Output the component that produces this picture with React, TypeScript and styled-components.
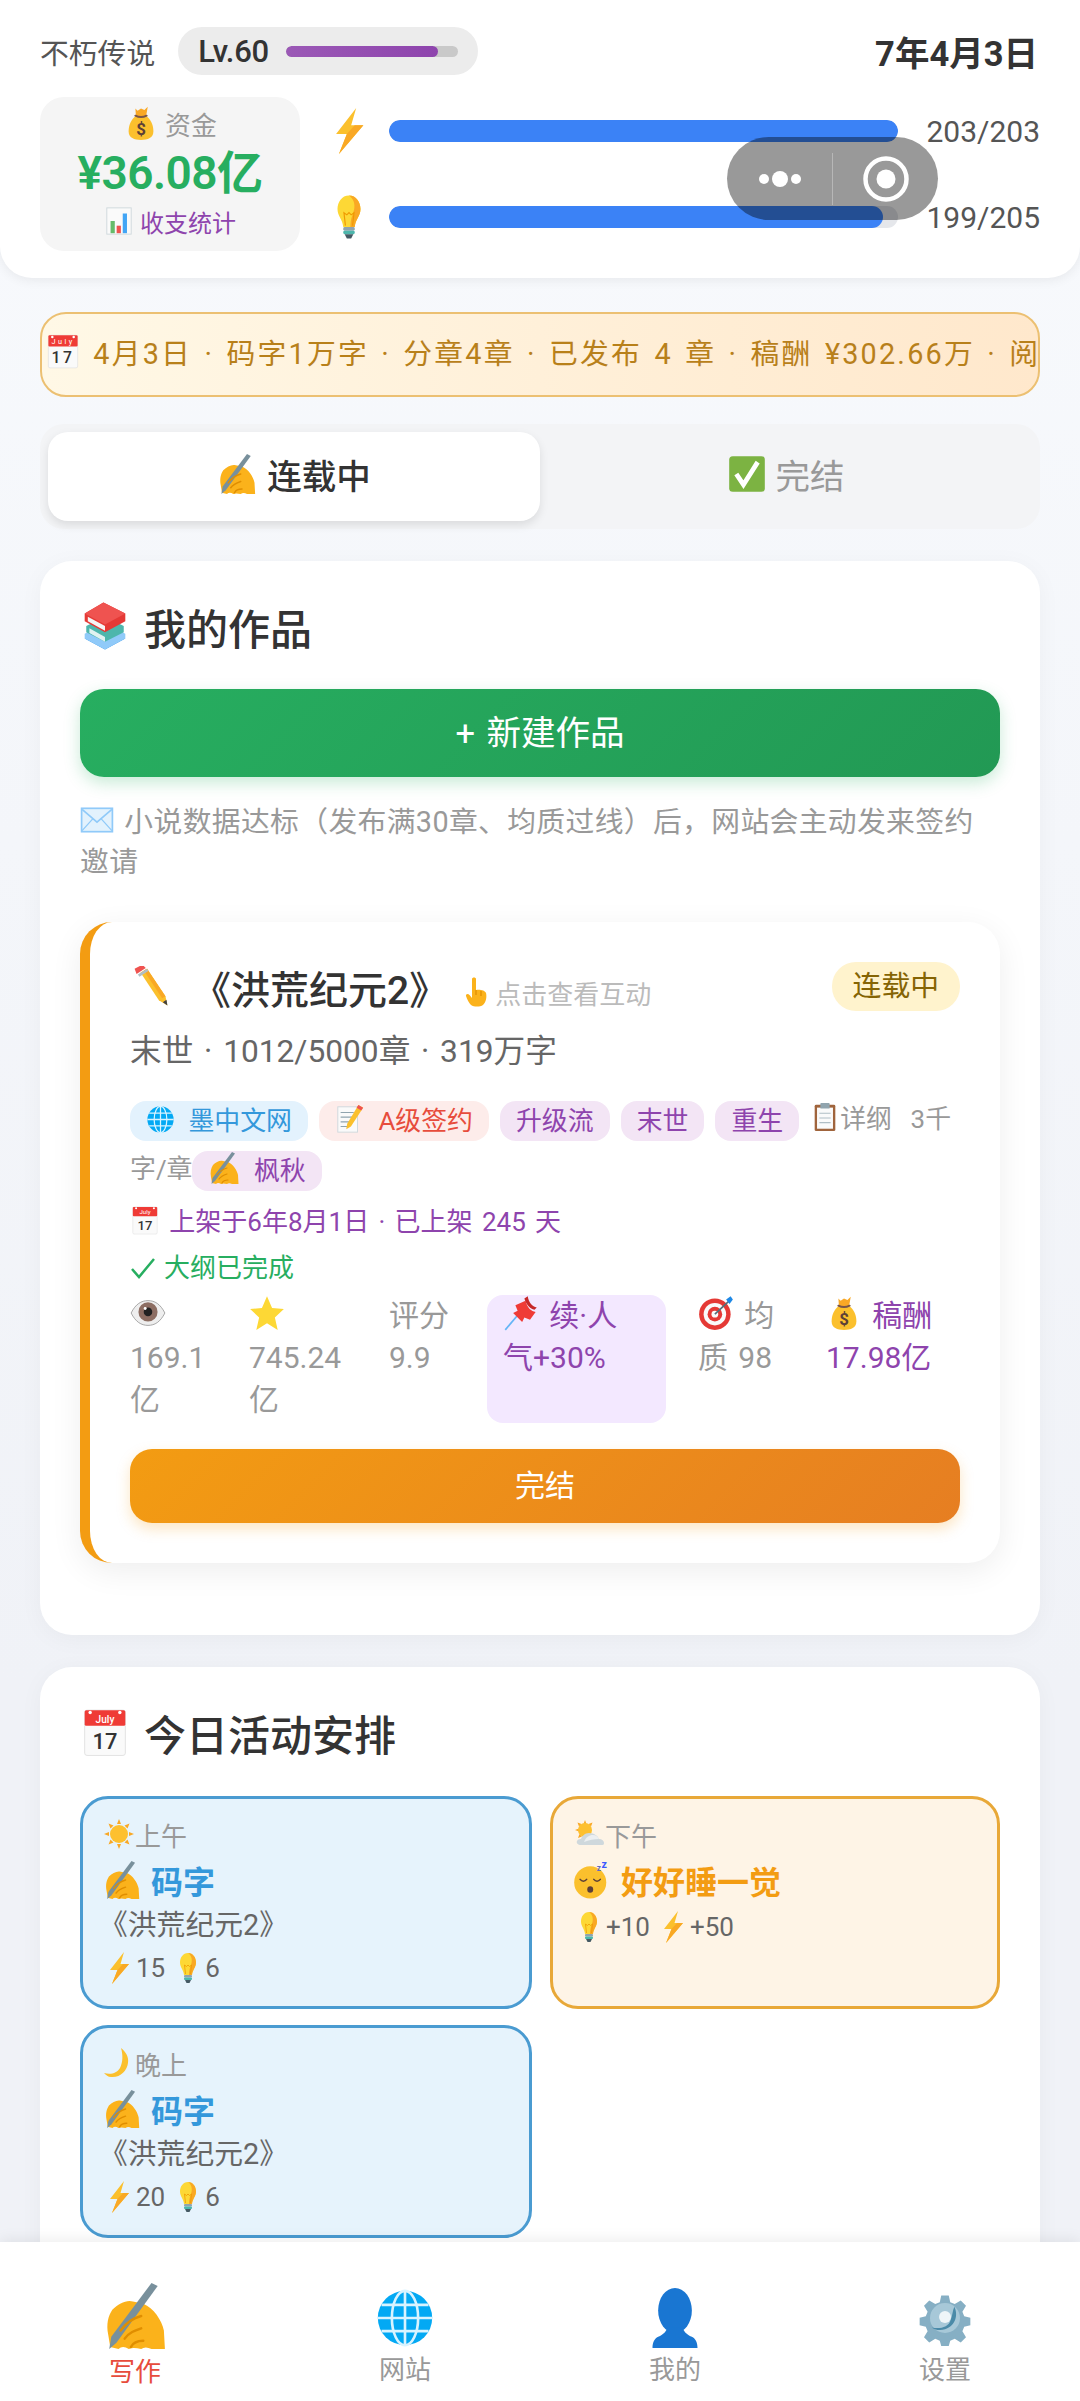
import React from 'react'
import styled, { createGlobalStyle } from 'styled-components'

const GlobalStyle = createGlobalStyle`
  html, body {
    margin: 0;
    padding: 0;
    background: #f4f6fa;
  }
  body {
    font-family: "Roboto", "Noto Sans CJK SC", sans-serif;
    word-spacing: 0.18em;
    color: #333333;
  }
  * {
    box-sizing: border-box;
  }
`

const glyphs: Record<string, React.ReactNode> = {
  bolt: (
    <>
      <polygon points="21,0 7,18 14.5,18 9,32 26,12 17.5,12" fill="#fbc02d" />
      <polygon points="14.5,18 9,32 26,12 20,12" fill="#f9a825" />
    </>
  ),
  bulb: (
    <>
      <path d="M16 1c-5 0-8 4.500-8 9.500 0 5 3.500 7 4 12.500h8c.5-5.500 4-7.500 4-12.500C24 5.500 21 1 16 1z" fill="#fdd835" />
      <path d="M16 1c3 2 4.500 6 3.500 10-.8 3.500-2.500 6-2.500 12h3c.5-5.500 4-7.500 4-12.500C24 5.500 21 1 16 1z" fill="#f9a825" />
      <path d="M13.500 22l-1-9 2 1.500 1.500-1.500 1.500 1.500 2-1.500-1 9" fill="none" stroke="#ef9a00" strokeWidth=".8" />
      <rect x="12" y="23" width="8" height="2.500" rx="1" fill="#90a4ae" />
      <rect x="12" y="25.500" width="8" height="2.500" rx="1" fill="#4db6ac" />
      <path d="M13 28h6l-1.500 3h-3z" fill="#455a64" />
    </>
  ),
  bag: (
    <>
      <path d="M11 10C6 14 5 20 5 23.500 5 29 10 31 16 31s11-2 11-7.500C27 20 26 14 21 10z" fill="#fbc02d" />
      <path d="M11 3l2 2 3-2 3 1.500 3-3-1.500 8.500h-9z" fill="#f9a825" />
      <path d="M11 9.500c3 1.500 7 1.500 10 0" fill="none" stroke="#795548" strokeWidth="1.800" strokeLinecap="round" />
      <text x="16" y="27" fontSize="15" fontWeight="700" fontFamily="Roboto, sans-serif" textAnchor="middle" fill="#5d4037">$</text>
    </>
  ),
  chart: (
    <>
      <rect x="3" y="2" width="26" height="28" fill="#fafafa" stroke="#cfd8dc" strokeWidth="1" />
      <rect x="7" y="16" width="4.500" height="13" fill="#66bb6a" />
      <rect x="13.500" y="21" width="4.500" height="8" fill="#ef5350" />
      <rect x="20" y="8" width="4.500" height="21" fill="#42a5f5" />
    </>
  ),
  calendar: (
    <>
      <rect x="3" y="2" width="26" height="29" rx="1.500" fill="#fafafa" stroke="#e0e0e0" strokeWidth=".6" />
      <rect x="3" y="2" width="26" height="10" rx="1" fill="#ef3b36" />
      <circle cx="6.500" cy="3.500" r="1.100" fill="#fff" />
      <circle cx="25.500" cy="3.500" r="1.100" fill="#fff" />
      <text x="16" y="10" fontSize="6.500" fontFamily="Roboto, sans-serif" textAnchor="middle" fill="#ffffff">July</text>
      <text x="16" y="27" fontSize="14" fontWeight="500" fontFamily="Roboto, sans-serif" textAnchor="middle" fill="#333333">17</text>
    </>
  ),
  writing: (
    <>
      <path d="M5 13C8 10 12 8 15 9l5 1c5 2 9 8 10 13l.5 9H24q-3-1.500-5 0-4-1-6 0-3-2-5 0l-4-1-1-6c-1-5 0-9 2-12z" fill="#fbb21b" />
      <polygon points="24,0 27,1.500 7,29 3.500,32 4.500,26" fill="#78909c" />
      <path d="M9 23c3-4 6-6 10-7M11 27c2-3 5-4 8-5M14 31c1-2 3-3 6-3" fill="none" stroke="#e08e00" strokeWidth="1.200" strokeLinecap="round" />
    </>
  ),
  check: (
    <>
      <rect x="1" y="1" width="30" height="30" rx="3" fill="#7cb342" />
      <polyline points="7,16 13,25 25,6" fill="none" stroke="#ffffff" strokeWidth="4" />
    </>
  ),
  books: (
    <>
      <path d="M3 24l13-7 13 7-13 7z" fill="#1e88e5" />
      <path d="M3 21l13-7 13 7v3l-13 7-13-7z" fill="#90caf9" />
      <path d="M4 16l12-6 12 6v4l-12 6-12-6z" fill="#4db6ac" />
      <path d="M6 17.500l10 5.500v3l-10-5.500z" fill="#e0f2f1" />
      <path d="M3 8L15 1l14 7v5l-13 7L3 13z" fill="#e53935" />
      <path d="M5 10l11 6v3L5 13z" fill="#f5f5f5" />
      <path d="M3 8l13 7 13-7-14-7z" fill="#ef5350" />
    </>
  ),
  mail: (
    <>
      <rect x="1.500" y="5" width="29" height="22" fill="#e3f2fd" stroke="#90caf9" strokeWidth="1.600" />
      <polyline points="2,6 16,18 30,6" fill="none" stroke="#90caf9" strokeWidth="1.600" />
      <path d="M2 26l10-11M30 26L20 15" fill="none" stroke="#90caf9" strokeWidth="1.200" />
    </>
  ),
  pencil: (
    <>
      <polygon points="8,5 13,2 27,23 28.500,30 22,26" fill="#fbc02d" />
      <polygon points="13,2 27,23 24.500,24.500 10.500,3.500" fill="#f9a825" />
      <polygon points="5,6 12,1.500 9.500,-1 3.500,2" fill="#ef5350" />
      <polygon points="6,6.500 13,2 14,3.800 7.200,8.200" fill="#b0bec5" />
      <polygon points="25,27.600 27.800,25.800 28.500,30" fill="#424242" />
    </>
  ),
  pointUp: (
    <>
      <path d="M13 3c0-2 4-2 4 0v11c3-1 9 0 10 3 1 4 0 9-3 12-3 2-9 2-12 0-2-2-4-6-5-9-.5-2 2-3 3.500-1l2.500 3z" fill="#fbb21b" />
      <path d="M17 14v5M22 15v5" stroke="#e08e00" strokeWidth="1.200" fill="none" />
    </>
  ),
  globe: (
    <>
      <circle cx="16" cy="16" r="14.500" fill="#03a9f4" />
      <ellipse cx="16" cy="16" rx="7" ry="14.500" fill="none" stroke="#d8f3ff" strokeWidth="1.400" />
      <path d="M16 1.500v29M1.500 16h29M3.500 9h25M3.500 23h25" stroke="#d8f3ff" strokeWidth="1.400" fill="none" />
    </>
  ),
  memo: (
    <>
      <rect x="3" y="3" width="21" height="27" fill="#fafafa" stroke="#cfd8dc" strokeWidth="1" />
      <path d="M6 9h14M6 14h14M6 19h10M6 24h8" stroke="#90a4ae" strokeWidth="1.200" />
      <polygon points="25,1 30,4 17,24 12,27 13,21" fill="#fbc02d" />
      <polygon points="25,1 30,4 28,7 23,4" fill="#ef5350" />
    </>
  ),
  clipboard: (
    <>
      <rect x="5" y="3" width="22" height="28" rx="1.500" fill="#a0643c" />
      <rect x="7.500" y="6" width="17" height="22.500" fill="#fafafa" />
      <rect x="11" y="1" width="10" height="6" rx="1" fill="#90a4ae" />
      <path d="M10 12h12M10 17h12M10 22h12" stroke="#b0bec5" strokeWidth="1.200" />
    </>
  ),
  eye: (
    <>
      <path d="M1 16C5 8 10 5 16 5s11 3 15 11c-4 8-9 11-15 11S5 24 1 16z" fill="#eeeeee" stroke="#9e9e9e" strokeWidth=".8" />
      <circle cx="16" cy="15" r="8.500" fill="#8d6e63" />
      <circle cx="16" cy="15" r="3.800" fill="#212121" />
      <circle cx="13.500" cy="12" r="1.300" fill="#ffffff" />
    </>
  ),
  star: (
    <polygon points="16,1 20.500,11.500 31,12.500 23,20 25.500,31 16,25 6.500,31 9,20 1,12.500 11.500,11.500" fill="#fdd835" />
  ),
  pin: (
    <>
      <line x1="2" y1="31" x2="13" y2="18" stroke="#64b5f6" strokeWidth="1.500" />
      <path d="M11 9l2 5-4 2 8 8 2-4 5 2 5-7c-4-1-7-3-9-10z" fill="#ef3b36" />
      <path d="M19 3c2 6 5 9 9 10l2-2c-4-1-7-4-8-10z" fill="#c62828" />
    </>
  ),
  target: (
    <>
      <circle cx="15" cy="17" r="14" fill="#e53935" />
      <circle cx="15" cy="17" r="10" fill="#fafafa" />
      <circle cx="15" cy="17" r="6.500" fill="#e53935" />
      <circle cx="15" cy="17" r="3" fill="#fafafa" />
      <line x1="15" y1="17" x2="28" y2="5" stroke="#546e7a" strokeWidth="1.500" />
      <polygon points="25,4 29,1 31,4 28,8" fill="#1e88e5" />
    </>
  ),
  sun: (
    <>
      <path d="M16 1l2 5h-4zM16 31l-2-5h4zM1 16l5-2v4zM31 16l-5 2v-4zM5.500 5.500l5 2-3 3zM26.500 26.500l-5-2 3-3zM26.500 5.500l-2 5-3-3zM5.500 26.500l2-5 3 3z" fill="#f9a825" />
      <circle cx="16" cy="16" r="9" fill="#fdc02f" />
    </>
  ),
  sunCloud: (
    <>
      <path d="M12 2l1.500 4h-3zM2 12l4-1.500v3zM4.500 4.500l4 1.500-2.500 2.500zM19.500 4.500l-1.500 4-2.500-2.500zM5 20l1.500-4 2.500 2.500z" fill="#f9a825" />
      <circle cx="12" cy="12" r="7" fill="#fdc02f" />
      <path d="M8 27c-3 0-5-2-4-4 1-2 3-2 4-2 1-3 4-6 8-6 5 0 9 3 10 6 3 0 5 2 5 4s-1 2-3 2z" fill="#cfd8dc" />
      <path d="M11 24c2-5 5-7 9-7 3 0 5 2 6 4-5 0-10 1-15 3z" fill="#eceff1" />
    </>
  ),
  moon: (
    <path d="M18 1c5 4 8 9 7 15-1 8-8 15-17 14-3 0-5-2-7-4 7 2 13 0 16-5 3-6 3-13 1-20z" fill="#fbc02d" />
  ),
  sleep: (
    <>
      <circle cx="14.500" cy="18" r="13.500" fill="#fbc02d" />
      <path d="M6 15.500c1.500 2 4 2 5.500 0M17.500 15.500c1.500 2 4 2 5.500 0" fill="none" stroke="#5d4037" strokeWidth="1.300" strokeLinecap="round" />
      <ellipse cx="14.500" cy="24" rx="2.500" ry="2.800" fill="#5d4037" />
      <text x="20" y="8" fontSize="7" fontWeight="700" fontFamily="Roboto, sans-serif" fill="#5c6bc0">z</text>
      <text x="24" y="6" fontSize="9" fontWeight="700" fontFamily="Roboto, sans-serif" fill="#3d5afe">z</text>
    </>
  ),
  person: (
    <>
      <ellipse cx="16" cy="12" rx="9" ry="12" fill="#1976d2" />
      <path d="M12 21h8c1 3 3 4 5 5 2 1 3 3 3 6H4c0-3 1-5 3-6 2-1 4-2 5-5z" fill="#1976d2" />
    </>
  ),
  gear: (
    <>
      <path
        d="M13.500 1h5l1 4.500 3 1.200 4-2.400 3.500 3.500-2.400 4 1.200 3 4.100 1v5l-4.100 1-1.200 3 2.400 4-3.500 3.500-4-2.400-3 1.200-1 3.600h-5l-1-3.600-3-1.200-4 2.400-3.500-3.500 2.400-4-1.200-3-4.100-1v-5l4.100-1 1.200-3-2.400-4 3.500-3.500 4 2.400 3-1.200z"
        transform="translate(3.200 3.200) scale(.8)"
        fill="#86afc4"
      />
      <circle cx="16" cy="16" r="8" fill="#a7c8d8" />
      <path d="M21 10c2 4 1 10-5 12-3 1-6 0-7-1 4 1 9 0 10-4 1-2 1-5 2-7z" fill="#4a8aa8" />
      <circle cx="16" cy="15.500" r="3.200" fill="#eef5f8" />
    </>
  ),
}

const GlyphSvg = styled.svg<{ $size: number }>`
  display: inline-block;
  width: ${({ $size }) => $size}px;
  height: ${({ $size }) => $size}px;
  vertical-align: -0.16em;
  flex-shrink: 0;
`

const Emoji = ({ name, size = 28 }: { name: string; size?: number }) => (
  <GlyphSvg $size={size} viewBox="0 0 32 32">
    {glyphs[name]}
  </GlyphSvg>
)

const Screen = styled.div`
  position: relative;
  width: 1080px;
  height: 2401px;
  overflow: hidden;
  background: linear-gradient(180deg, #f8fafd 0%, #f0f2f7 70%);
`

const Header = styled.header`
  height: 278px;
  padding: 27px 40px 0;
  background: #ffffff;
  border-radius: 0 0 32px 32px;
  box-shadow: 0 2px 12px rgba(0, 0, 0, 0.07);
`

const TopRow = styled.div`
  display: flex;
  align-items: center;
  justify-content: space-between;
  height: 48px;
`

const Identity = styled.div`
  display: flex;
  align-items: center;
  gap: 23px;
  font-size: 28.8px;
  color: #555555;
`

const LevelPill = styled.div`
  display: flex;
  align-items: center;
  width: 300px;
  height: 48px;
  padding: 0 20px;
  gap: 17px;
  background: #ececec;
  border-radius: 24px;
  font-size: 31px;
  font-weight: 500;
  letter-spacing: -0.3px;
  color: #333333;
`

const LevelTrack = styled.div`
  flex: 1;
  height: 11px;
  background: #c9c9c9;
  border-radius: 6px;
  overflow: hidden;
`

const LevelFill = styled.div`
  height: 100%;
  background: linear-gradient(90deg, #9b59b6, #8e44ad);
  border-radius: 6px;
`

const DateText = styled.div`
  margin-right: 2px;
  font-size: 34.5px;
  font-weight: 700;
  color: #333333;
`

const StatusRow = styled.div`
  display: flex;
  gap: 30px;
  margin-top: 22px;
`

const FundCard = styled.div`
  display: flex;
  flex-direction: column;
  align-items: center;
  width: 260px;
  height: 154px;
  background: #f5f5f5;
  border-radius: 24px;
`

const FundLabel = styled.div`
  display: flex;
  align-items: center;
  justify-content: center;
  gap: 6px;
  height: 36px;
  margin-top: 8px;
  font-size: 25.9px;
  color: #999999;
`

const FundValue = styled.div`
  height: 60px;
  line-height: 60px;
  margin-top: 2px;
  font-size: 46px;
  font-weight: 600;
  color: #27ae60;
  letter-spacing: -0.5px;
`

const FundLink = styled.div`
  display: flex;
  align-items: center;
  gap: 6px;
  height: 34px;
  margin-top: 1px;
  font-size: 24px;
  color: #8e44ad;
`

const Meters = styled.div`
  display: flex;
  flex: 1;
  flex-direction: column;
  justify-content: center;
  gap: 36px;
`

const Meter = styled.div`
  display: flex;
  align-items: center;
  height: 50px;
`

const MeterIcon = styled.div`
  display: flex;
  justify-content: center;
  width: 37px;
  margin-right: 22px;
`

const MeterTrack = styled.div`
  flex: 1;
  height: 22px;
  background: #e5e7eb;
  border-radius: 11px;
  overflow: hidden;
`

const MeterFill = styled.div`
  height: 100%;
  background: #3b82f6;
  border-radius: 11px;
`

const MeterText = styled.div`
  width: 130px;
  margin-left: 12px;
  text-align: right;
  font-size: 30px;
  color: #555555;
`

const Capsule = styled.div`
  position: absolute;
  top: 137px;
  left: 727px;
  display: flex;
  align-items: center;
  width: 211px;
  height: 83px;
  background: rgba(0, 0, 0, 0.4);
  border-radius: 42px;
`

const CapsulePart = styled.div`
  display: flex;
  flex: 1;
  align-items: center;
  justify-content: center;
  height: 100%;
`

const CapsuleDivider = styled.div`
  width: 1px;
  height: 52px;
  background: rgba(255, 255, 255, 0.3);
`

const Banner = styled.div`
  height: 85px;
  margin: 34px 40px 0;
  padding-left: 3px;
  line-height: 81px;
  background: linear-gradient(90deg, #fff8e6, #ffe8cc);
  border: 2px solid #ecc072;
  border-radius: 26px;
  overflow: hidden;
  white-space: nowrap;
  font-size: 28.8px;
  letter-spacing: 2.2px;
  word-spacing: 3px;
  color: #b8801a;
`

const Tabs = styled.div`
  display: flex;
  gap: 0;
  height: 105px;
  margin: 27px 40px 0;
  padding: 8px;
  background: #f3f4f6;
  border-radius: 24px;
`

const Tab = styled.div<{ $active?: boolean }>`
  display: flex;
  flex: 1;
  align-items: center;
  justify-content: center;
  gap: 10px;
  padding-bottom: 5px;
  border-radius: 20px;
  font-size: 34.5px;
  font-weight: ${({ $active }) => ($active ? 500 : 400)};
  color: ${({ $active }) => ($active ? '#333333' : '#999999')};
  background: ${({ $active }) => ($active ? '#ffffff' : 'transparent')};
  box-shadow: ${({ $active }) => ($active ? '0 4px 10px rgba(0, 0, 0, 0.1)' : 'none')};
`

const Section = styled.section<{ $gap: number; $bottom: number }>`
  margin: ${({ $gap }) => $gap}px 40px 0;
  padding: 39px 40px ${({ $bottom }) => $bottom}px;
  background: #ffffff;
  border-radius: 32px;
  box-shadow: 0 4px 24px rgba(0, 0, 0, 0.04);
`

const SectionTitle = styled.h2`
  display: flex;
  align-items: center;
  gap: 14px;
  height: 60px;
  margin: 0;
  padding-bottom: 8px;
  font-size: 42px;
  font-weight: 500;
  color: #333333;
`

const NewButton = styled.div`
  height: 88px;
  margin-top: 29px;
  line-height: 88px;
  text-align: center;
  background: linear-gradient(135deg, #27ae60, #229954);
  border-radius: 24px;
  box-shadow: 0 6px 16px rgba(39, 174, 96, 0.25);
  font-size: 34.5px;
  color: #ffffff;
`

const Hint = styled.p`
  margin: 25px 0 0;
  font-size: 28.8px;
  letter-spacing: 0.35px;
  line-height: 40px;
  color: #999999;
`

const BookCard = styled.article`
  margin-top: 40px;
  padding: 40px;
  background: #ffffff;
  border-left: 10px solid #f39c12;
  border-radius: 32px;
  box-shadow: 0 8px 32px rgba(0, 0, 0, 0.07);
`

const BookHead = styled.div`
  display: flex;
  align-items: flex-start;
  justify-content: space-between;
`

const BookTitle = styled.div`
  display: flex;
  align-items: center;
  height: 56px;
  gap: 20px;
  padding-bottom: 6px;
  font-size: 39px;
  font-weight: 500;
  color: #333333;
`

const BookHintText = styled.span`
  display: flex;
  align-items: center;
  margin-top: 10px;
  margin-left: -9px;
  gap: 4px;
  font-size: 26px;
  font-weight: 400;
  color: #bbbbbb;
`

const StatusBadge = styled.div`
  height: 49px;
  padding: 0 21px;
  line-height: 49px;
  background: #fff3cd;
  border-radius: 24px;
  font-size: 28.8px;
  color: #856404;
`

const BookMeta = styled.div`
  margin-top: 12px;
  line-height: 44px;
  font-size: 31.7px;
  color: #666666;
`

const TagLine = styled.div`
  margin-top: 20px;
  line-height: 50px;
  font-size: 25.9px;
  color: #999999;
`

const tagTones = {
  blue: { bg: '#e3f2fd', fg: '#3498db' },
  red: { bg: '#fdecea', fg: '#e74c3c' },
  purple: { bg: '#f3e5f5', fg: '#8e44ad' },
}

const Tag = styled.span<{ $tone: keyof typeof tagTones }>`
  display: inline-block;
  height: 40px;
  margin-right: 11px;
  padding: 0 16px;
  line-height: 40px;
  vertical-align: middle;
  word-spacing: 0.27em;
  border-radius: 16px;
  background: ${({ $tone }) => tagTones[$tone].bg};
  color: ${({ $tone }) => tagTones[$tone].fg};
`

const OnlineDate = styled.div`
  margin-top: 6px;
  line-height: 44px;
  font-size: 26px;
  color: #8e44ad;
`

const OutlineDone = styled.div`
  display: flex;
  align-items: center;
  gap: 8px;
  margin-top: 2px;
  line-height: 44px;
  font-size: 26px;
  color: #27ae60;
`

const Stats = styled.div`
  display: grid;
  grid-template-columns: 87px 108px 66px 179px 96px 1fr;
  column-gap: 32px;
  margin-top: 5px;
`

const Stat = styled.div<{ $accent?: boolean; $highlight?: boolean }>`
  min-height: 128px;
  padding: ${({ $highlight }) => ($highlight ? '0 20px 0 16px' : '0')};
  line-height: 42px;
  font-size: 30px;
  color: ${({ $accent }) => ($accent ? '#8e44ad' : '#999999')};
  background: ${({ $highlight }) => ($highlight ? '#f3e8ff' : 'transparent')};
  border-radius: 16px;
`

const FinishButton = styled.div`
  height: 74px;
  margin-top: 26px;
  line-height: 74px;
  text-align: center;
  background: linear-gradient(135deg, #f39c12, #e67e22);
  border-radius: 22px;
  box-shadow: 0 6px 14px rgba(243, 156, 18, 0.25);
  font-size: 30px;
  color: #ffffff;
`

const ActivityGrid = styled.div`
  display: grid;
  grid-template-columns: 452px 450px;
  column-gap: 18px;
  row-gap: 16px;
  margin-top: 30px;
`

const activityTones = {
  write: { border: '#4a9bd1', bg: '#e6f3fc', fg: '#3498db' },
  rest: { border: '#e8a838', bg: '#fef4e6', fg: '#f39c12' },
}

const Activity = styled.div<{ $tone: keyof typeof activityTones }>`
  padding: 20px;
  border: 3px solid ${({ $tone }) => activityTones[$tone].border};
  border-radius: 28px;
  background: ${({ $tone }) => activityTones[$tone].bg};
  --activity-fg: ${({ $tone }) => activityTones[$tone].fg};
`

const ActivityTime = styled.div`
  display: flex;
  align-items: center;
  height: 36px;
  margin-top: -3px;
  font-size: 26px;
  color: #999999;
`

const ActivityName = styled.div`
  display: flex;
  align-items: center;
  gap: 10px;
  height: 44px;
  margin-top: 6px;
  font-size: 32px;
  font-weight: 700;
  color: var(--activity-fg);
`

const ActivityBook = styled.div`
  height: 36px;
  margin-top: 5px;
  margin-left: -4px;
  line-height: 36px;
  font-size: 28.8px;
  color: #666666;
`

const ActivityCost = styled.div`
  display: flex;
  align-items: center;
  gap: 1px;
  height: 36px;
  margin-top: 7px;
  font-size: 26px;
  color: #666666;
`

const CostGap = styled.span`
  width: 5px;
`

const BottomNav = styled.nav`
  position: absolute;
  left: 0;
  right: 0;
  bottom: 0;
  display: grid;
  grid-template-columns: repeat(4, 270px);
  height: 159px;
  padding-top: 38px;
  background: #ffffff;
  box-shadow: 0 -2px 14px rgba(0, 0, 0, 0.08);
`

const NavItem = styled.div<{ $active?: boolean }>`
  display: flex;
  flex-direction: column;
  align-items: center;
  font-size: 26px;
  line-height: 36px;
  color: ${({ $active }) => ($active ? '#e74c3c' : '#999999')};
`

const NavIcon = styled.div<{ $active?: boolean }>`
  height: ${({ $active }) => ($active ? 74 : 72)}px;
  padding-top: ${({ $active }) => ($active ? 3 : 8)}px;
`

const tabs = [
  { icon: 'writing', label: '写作', size: 66 },
  { icon: 'globe', label: '网站', size: 60 },
  { icon: 'person', label: '我的', size: 60 },
  { icon: 'gear', label: '设置', size: 60 },
]

const App = () => {
  return (
    <Screen>
      <GlobalStyle />
      <Header>
        <TopRow>
          <Identity>
            不朽传说
            <LevelPill>
              Lv.60
              <LevelTrack>
                <LevelFill style={{ width: '88%' }} />
              </LevelTrack>
            </LevelPill>
          </Identity>
          <DateText>7年4月3日</DateText>
        </TopRow>
        <StatusRow>
          <FundCard>
            <FundLabel>
              <Emoji name="bag" size={36} />
              资金
            </FundLabel>
            <FundValue>¥36.08亿</FundValue>
            <FundLink>
              <Emoji name="chart" size={30} />
              收支统计
            </FundLink>
          </FundCard>
          <Meters>
            <Meter>
              <MeterIcon>
                <Emoji name="bolt" size={46} />
              </MeterIcon>
              <MeterTrack>
                <MeterFill style={{ width: '100%' }} />
              </MeterTrack>
              <MeterText>203/203</MeterText>
            </Meter>
            <Meter>
              <MeterIcon>
                <Emoji name="bulb" size={46} />
              </MeterIcon>
              <MeterTrack>
                <MeterFill style={{ width: `${(199 / 205) * 100}%` }} />
              </MeterTrack>
              <MeterText>199/205</MeterText>
            </Meter>
          </Meters>
        </StatusRow>
      </Header>
      <Capsule>
        <CapsulePart>
          <svg width="48" height="20" viewBox="0 0 48 20">
            <circle cx="8" cy="10" r="5" fill="#fff" />
            <circle cx="24" cy="10" r="8" fill="#fff" />
            <circle cx="40" cy="10" r="5" fill="#fff" />
          </svg>
        </CapsulePart>
        <CapsuleDivider />
        <CapsulePart>
          <svg width="46" height="46" viewBox="0 0 46 46">
            <circle cx="23" cy="23" r="20.500" fill="none" stroke="#fff" strokeWidth="4.500" />
            <circle cx="23" cy="23" r="9.500" fill="#fff" />
          </svg>
        </CapsulePart>
      </Capsule>

      <Banner>
        <Emoji name="calendar" size={36} /> 4月3日 · 码字1万字 · 分章4章 · 已发布 4 章 · 稿酬 ¥302.66万 · 阅读量增长
      </Banner>

      <Tabs>
        <Tab $active>
          <Emoji name="writing" size={40} />
          连载中
        </Tab>
        <Tab>
          <Emoji name="check" size={38} />
          完结
        </Tab>
      </Tabs>

      <Section $gap={32} $bottom={72}>
        <SectionTitle>
          <Emoji name="books" size={50} />
          我的作品
        </SectionTitle>
        <NewButton>+ 新建作品</NewButton>
        <Hint>
          <Emoji name="mail" size={34} /> 小说数据达标（发布满30章、均质过线）后，网站会主动发来签约邀请
        </Hint>
        <BookCard>
          <BookHead>
            <BookTitle>
              <Emoji name="pencil" size={42} />
              《洪荒纪元2》
              <BookHintText>
                <Emoji name="pointUp" size={32} />
                点击查看互动
              </BookHintText>
            </BookTitle>
            <StatusBadge>连载中</StatusBadge>
          </BookHead>
          <BookMeta>末世 · 1012/5000章 · 319万字</BookMeta>
          <TagLine>
            <Tag $tone="blue">
              <Emoji name="globe" size={29} /> 墨中文网
            </Tag>
            <Tag $tone="red">
              <Emoji name="memo" size={30} /> A级签约
            </Tag>
            <Tag $tone="purple">升级流</Tag>
            <Tag $tone="purple">末世</Tag>
            <Tag $tone="purple">重生</Tag>
            <Emoji name="clipboard" size={30} />详纲&nbsp;&nbsp;3千字/章
            <Tag $tone="purple">
              <Emoji name="writing" size={32} /> 枫秋
            </Tag>
          </TagLine>
          <OnlineDate>
            <Emoji name="calendar" size={30} /> 上架于6年8月1日 · 已上架 245 天
          </OnlineDate>
          <OutlineDone>
            <svg width="26" height="26" viewBox="0 0 26 26">
              <polyline points="2,14 9,22 24,4" fill="none" stroke="#27ae60" strokeWidth="2.500" />
            </svg>
            大纲已完成
          </OutlineDone>
          <Stats>
            <Stat>
              <Emoji name="eye" size={36} /> 169.1亿
            </Stat>
            <Stat>
              <Emoji name="star" size={36} /> 745.24亿
            </Stat>
            <Stat>评分 9.9</Stat>
            <Stat $accent $highlight>
              <Emoji name="pin" size={36} /> 续·人气+30%
            </Stat>
            <Stat>
              <Emoji name="target" size={36} /> 均质 98
            </Stat>
            <Stat $accent>
              <Emoji name="bag" size={36} /> 稿酬 17.98亿
            </Stat>
          </Stats>
          <FinishButton>完结</FinishButton>
        </BookCard>
      </Section>

      <Section $gap={32} $bottom={40}>
        <SectionTitle>
          <Emoji name="calendar" size={50} />
          今日活动安排
        </SectionTitle>
        <ActivityGrid>
          <Activity $tone="write">
            <ActivityTime>
              <Emoji name="sun" size={32} />
              上午
            </ActivityTime>
            <ActivityName>
              <Emoji name="writing" size={38} />
              码字
            </ActivityName>
            <ActivityBook>《洪荒纪元2》</ActivityBook>
            <ActivityCost>
              <Emoji name="bolt" size={32} />
              15
              <CostGap />
              <Emoji name="bulb" size={32} />
              6
            </ActivityCost>
          </Activity>
          <Activity $tone="rest">
            <ActivityTime>
              <Emoji name="sunCloud" size={32} />
              下午
            </ActivityTime>
            <ActivityName>
              <Emoji name="sleep" size={38} />
              好好睡一觉
            </ActivityName>
            <ActivityCost>
              <Emoji name="bulb" size={32} />
              +10
              <CostGap />
              <Emoji name="bolt" size={32} />
              +50
            </ActivityCost>
          </Activity>
          <Activity $tone="write">
            <ActivityTime>
              <Emoji name="moon" size={32} />
              晚上
            </ActivityTime>
            <ActivityName>
              <Emoji name="writing" size={38} />
              码字
            </ActivityName>
            <ActivityBook>《洪荒纪元2》</ActivityBook>
            <ActivityCost>
              <Emoji name="bolt" size={32} />
              20
              <CostGap />
              <Emoji name="bulb" size={32} />
              6
            </ActivityCost>
          </Activity>
        </ActivityGrid>
      </Section>

      <BottomNav>
        {tabs.map((tab, i) => (
          <NavItem key={tab.label} $active={i === 0}>
            <NavIcon $active={i === 0}>
              <Emoji name={tab.icon} size={tab.size} />
            </NavIcon>
            {tab.label}
          </NavItem>
        ))}
      </BottomNav>
    </Screen>
  )
}

export default App
